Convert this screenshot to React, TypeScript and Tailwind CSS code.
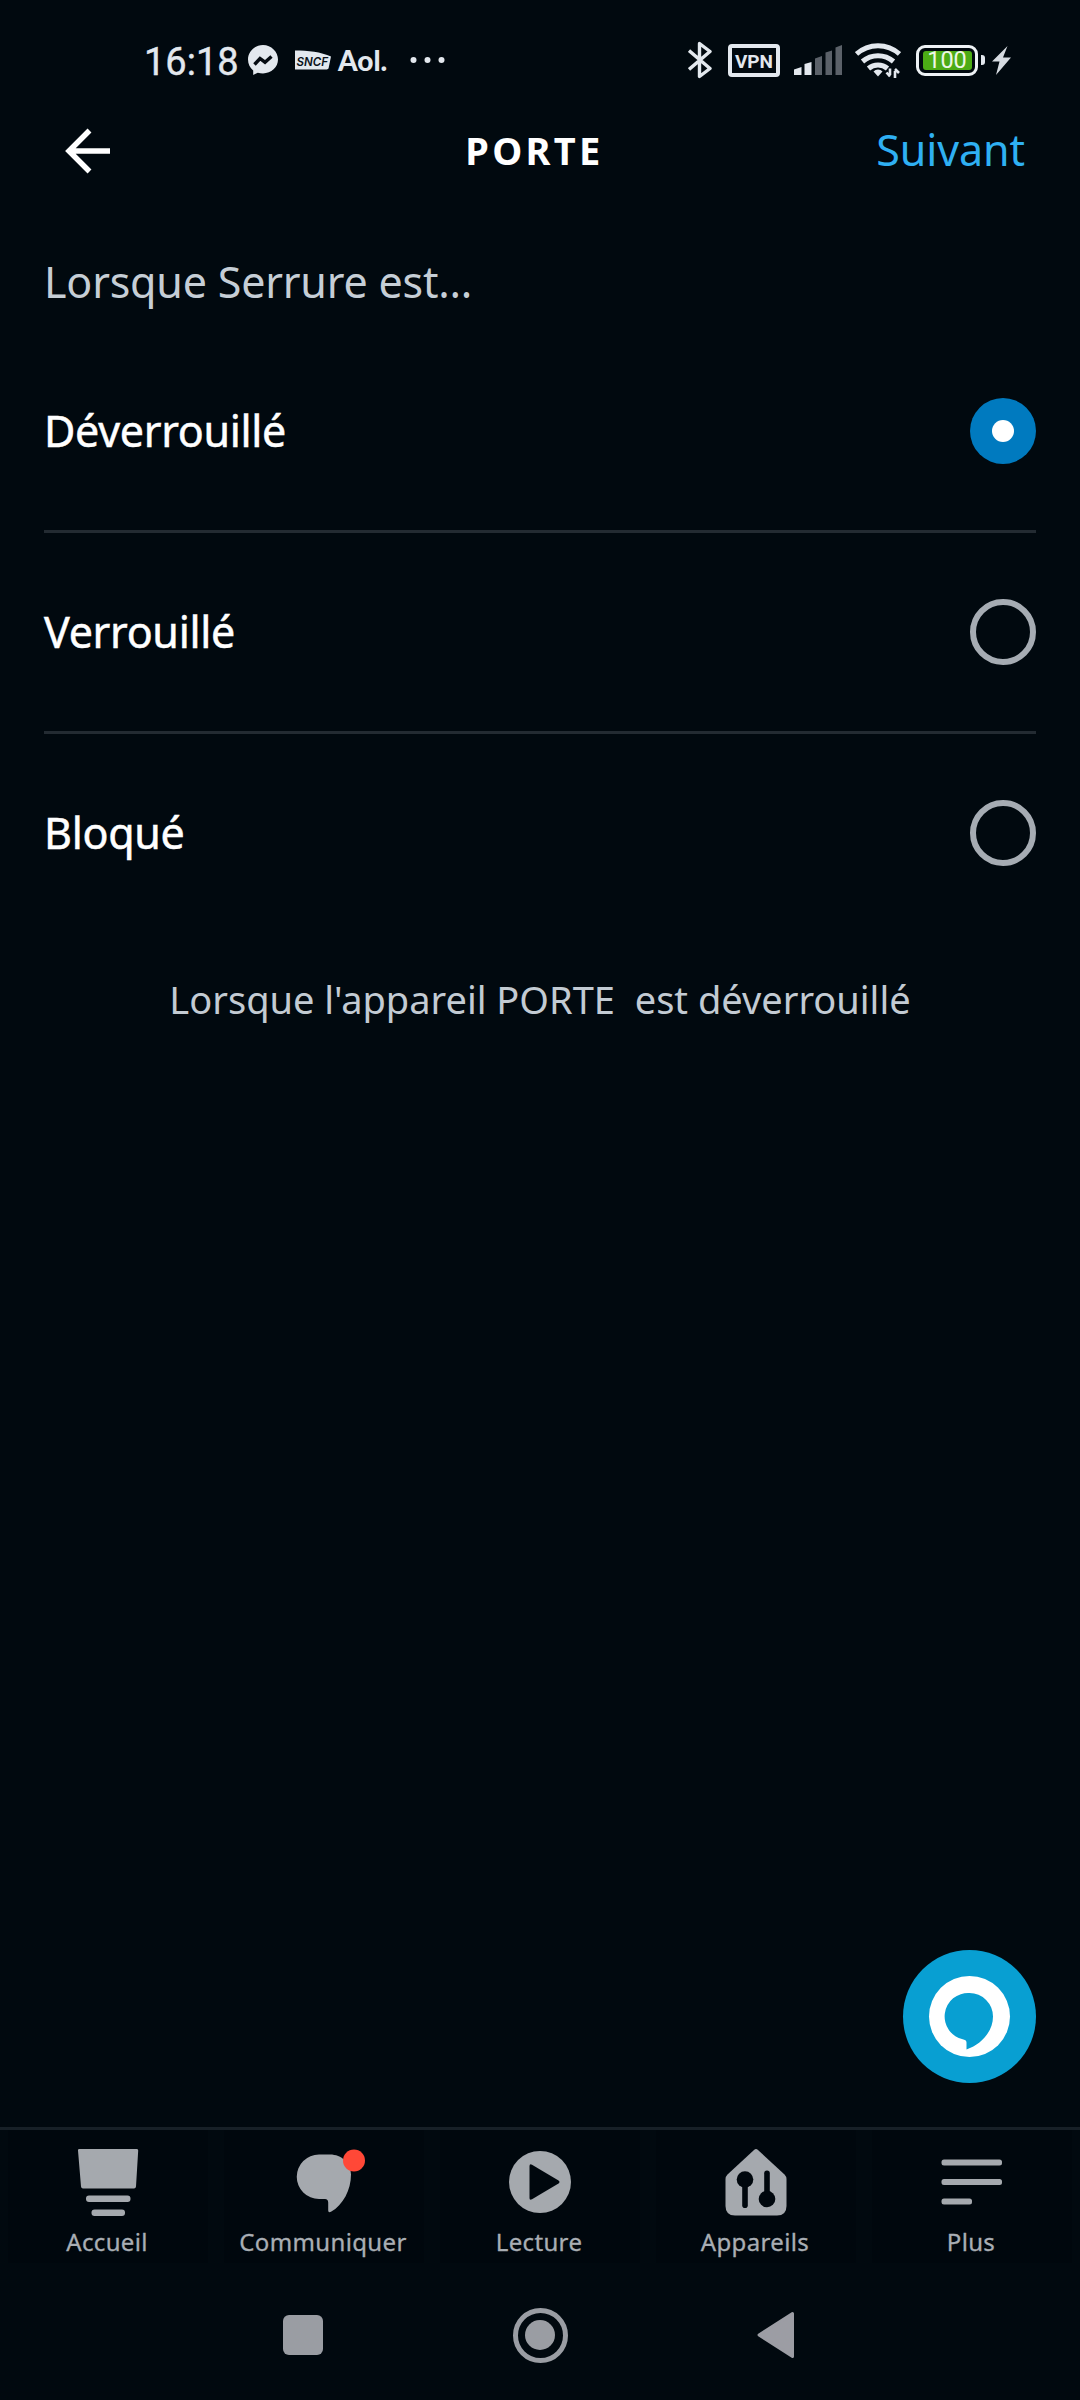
import { useState, type ReactNode } from "react";

function StatusBar() {
  return (
    <div className="flex h-[120px] shrink-0 items-center justify-between pl-[144px] pr-[69px] text-[#e3e8ee]">
      <div className="flex items-center">
        <span className="w-[104px] pt-[3px] font-['Roboto',sans-serif] text-[38px] leading-[44px] [-webkit-text-stroke:0.4px_#e3e8ee]">16:18</span>
        <svg width="30" height="32" viewBox="0 0 30 32" className="mr-[17px]">
          <path
            d="M15 1C6.700 1 0 7.400 0 15.600c0 4.500 2 8.300 5.200 10.900V31l4.600-2.300c1.600.5 3.400.8 5.200.8 8.300 0 15-6.200 15-13.900S23.300 1 15 1Z"
            fill="#e3e8ee"
          />
          <path d="M6.500 20.500 12 14.500 17 18.200 23.500 12.500" fill="none" stroke="#050b12" strokeWidth="3.400" strokeLinejoin="miter" />
        </svg>
        <svg width="36" height="20" viewBox="0 0 36 20" className="mr-[7px]">
          <path d="M0 .5C13 .5 26 2 36 6.500L33.500 18.500 32 19.500H0Z" fill="#e3e8ee" />
          <text
            x="1.500"
            y="16"
            textLength="31.500"
            lengthAdjust="spacingAndGlyphs"
            className="fill-[#0a1118] font-['Inter',sans-serif] text-[12px] font-semibold italic"
          >
            SNCF
          </text>
        </svg>
        <span className="w-[72px] font-['Lato',sans-serif] text-[28px] font-black leading-[34px]">Aol.</span>
        <svg width="36" height="8" viewBox="0 0 36 8" fill="#e3e8ee">
          <circle cx="3.500" cy="4" r="3" />
          <circle cx="17.500" cy="4" r="3" />
          <circle cx="31.500" cy="4" r="3" />
        </svg>
      </div>
      <div className="flex items-center">
        <svg width="24" height="38" viewBox="0 0 24 38" fill="none" stroke="#e3e8ee" strokeWidth="3.400" className="mr-4">
          <path d="M1 9.500 22 27.500 11.500 35.500V2.500L22 10.500 1 28.500" strokeLinejoin="round" />
        </svg>
        <div className="mr-[14px] flex h-[33px] w-[52px] items-center justify-center rounded-[4px] border-4 border-[#e3e8ee] pt-[2px] font-['Roboto',sans-serif] text-[19px] font-bold leading-none">
          VPN
        </div>
        <svg width="48" height="30" viewBox="0 0 48 30" className="mr-[13px]">
          <g fill="#e3e8ee">
            <path d="M0 24.500 7.500 22V30H0Z" />
            <path d="M10.500 19 17.500 17V30H10.500Z" />
          </g>
          <g fill="#5b6169">
            <path d="M21 13.500 28 11V30H21Z" />
            <path d="M31.500 7.500 38 5.500V30H31.500Z" />
            <path d="M41.500 2.500 48 0V30H41.500Z" />
          </g>
        </svg>
        <svg width="46" height="36" viewBox="0 0 46 36" className="mr-[15px]">
          <g fill="none" stroke="#e3e8ee" strokeWidth="5">
            <path d="M1.500 12a32 32 0 0 1 43 0" />
            <path d="M7.500 19.500a23.500 23.500 0 0 1 31 0" />
            <path d="M13.500 26.500a14.500 14.500 0 0 1 19 0" />
          </g>
          <path d="M18.500 29.500a6 6 0 0 1 9 0L23 34.500Z" fill="#e3e8ee" />
          <path d="M35 26.500V33M35 34.500 31.500 30.500M40 36V29M40 27 44 31" fill="none" stroke="#e3e8ee" strokeWidth="2.600" />
        </svg>
        <div className="flex items-center">
          <div className="flex h-[31px] w-[62px] items-center justify-center rounded-[9px] border-[3px] border-[#eef2f5]">
            <span className="flex h-[19px] w-[49px] items-center justify-center rounded-[3px] bg-[#4cab15] pt-[2px] font-['Roboto',sans-serif] text-[23.5px] leading-none text-[#edf7e6]">
              100
            </span>
          </div>
          <span className="ml-[3px] mr-[7px] h-[10px] w-1 rounded-r-[3px] bg-[#e3e8ee]" />
        </div>
        <svg width="19" height="29" viewBox="0 0 19 29">
          <path d="M15.500 0 0 15.500H7.500L4 29 19 11.500H11Z" fill="#d6dbe1" />
        </svg>
      </div>
    </div>
  );
}

function Header() {
  return (
    <div className="grid h-[62px] shrink-0 grid-cols-3 items-center pl-[64px] pr-[55px]">
      <svg width="48" height="48" viewBox="0 0 48 48" fill="none" stroke="#fff" strokeWidth="5.500">
        <path d="M46 24H6M25.500 3.500 5 24 25.500 44.500" />
      </svg>
      <h1 className="-ml-[20px] -mt-[3px] text-center text-[38px] font-bold leading-[58px] tracking-[3.300px] text-white">PORTE</h1>
      <button className="-mt-[2px] text-right text-[43px] leading-[60px] tracking-[-0.100px] text-[#2fb0f3]">Suivant</button>
    </div>
  );
}

function Radio({ selected }: { selected: boolean }) {
  return selected ? (
    <span className="flex size-[66px] items-center justify-center rounded-full bg-[#007abf]">
      <span className="size-[22px] rounded-full bg-white" />
    </span>
  ) : (
    <span className="size-[66px] rounded-full border-6 border-[#a6acb3]" />
  );
}

const options = ["Déverrouillé", "Verrouillé", "Bloqué"];

const tabs: { label: string; icon: ReactNode }[] = [
  {
    label: "Accueil",
    icon: (
      <>
        <path d="M4 1H62A1.500 1.500 0 0 1 63.200 2.500L61 38.500Q60.800 40.500 59 40.500H8Q6.200 40.500 6 38.500L3 2.500Q2.700 1 4 1Z" />
        <rect x="11" y="47.500" width="44.500" height="6.500" rx="3" />
        <rect x="16.500" y="61.500" width="33.500" height="6.500" rx="3" />
      </>
    ),
  },
  {
    label: "Communiquer",
    icon: (
      <>
        <path d="M28 6.500H39C50.500 6.500 60 15 60 26.500C60 42 52 57 40 63.800Q37.200 65 37.200 62.500V54.500Q37.200 51 34 51H28A22.250 22.250 0 0 1 28 6.500Z" />
        <circle cx="63" cy="12.500" r="11" fill="#ff4837" />
      </>
    ),
  },
  {
    label: "Lecture",
    icon: (
      <>
        <circle cx="33" cy="34" r="31" />
        <path d="M22.500 18Q22.500 15.500 25 16.700L51.500 32.500Q53.500 34 51.500 35.500L25 51.200Q22.500 52.500 22.500 50Z" fill="#00070d" />
      </>
    ),
  },
  {
    label: "Appareils",
    icon: (
      <>
        <path d="M31 2Q33 .2 35 2L61.500 26.500Q63.500 28.500 63.500 31V58Q63.500 67.500 54 67.500H12Q2.500 67.500 2.500 58V31Q2.500 28.500 4.500 26.500Z" />
        <g fill="#00070d">
          <circle cx="22" cy="31.500" r="8.300" />
          <rect x="19.200" y="31" width="5.600" height="29" rx="2.800" />
          <circle cx="44" cy="51" r="8.300" />
          <rect x="41.200" y="22.500" width="5.600" height="29" rx="2.800" />
        </g>
      </>
    ),
  },
  {
    label: "Plus",
    icon: (
      <>
        <rect x="2.500" y="11.500" width="60.500" height="6" rx="2.500" />
        <rect x="2.500" y="31" width="60.500" height="6" rx="2.500" />
        <rect x="2.500" y="50.500" width="30.500" height="6" rx="2.500" />
      </>
    ),
  },
];

function TabBar() {
  return (
    <nav className="grid h-[152px] shrink-0 grid-cols-5 border-t-[3px] border-[#172027]">
      {tabs.map((tab) => (
        <div key={tab.label} className="mx-2 mb-4 flex flex-col items-center bg-[#00070d] pt-[18px]">
          <svg width="66" height="70" viewBox="0 0 66 70" fill="#a5a9ae" className="shrink-0 overflow-visible">
            {tab.icon}
          </svg>
          <span className="-ml-[2px] mt-[7px] text-[24px] leading-[34px] tracking-[0.350px] text-[#a9aeb4] [-webkit-text-stroke:0.3px_#a9aeb4]">
            {tab.label}
          </span>
        </div>
      ))}
    </nav>
  );
}

function SystemBar() {
  return (
    <div className="flex h-[121px] shrink-0 items-center justify-between pb-[9px] pl-[283px] pr-[285px]">
      <span className="size-10 rounded-[6px] bg-[#9a9da3]" />
      <span className="flex size-[55px] items-center justify-center rounded-full border-[5px] border-[#9a9da3]">
        <span className="size-[30px] rounded-full bg-[#9a9da3]" />
      </span>
      <svg width="38" height="48" viewBox="0 0 38 48">
        <path d="M2 24 35.500 2.500V45.500Z" fill="#9c9da4" stroke="#9c9da4" strokeWidth="3" strokeLinejoin="round" />
      </svg>
    </div>
  );
}

export default function App() {
  const [selected, setSelected] = useState(0);
  return (
    <div className="relative flex h-[2400px] w-[1080px] flex-col overflow-hidden bg-[#01090f] font-['Noto_Sans',sans-serif]">
      <StatusBar />
      <Header />
      <main className="flex grow flex-col px-11">
        <p className="mt-[70px] text-[43px] leading-[60px] tracking-[-0.200px] text-[#c6ced6]">Lorsque Serrure est…</p>
        <div className="mt-[20px] flex flex-col divide-y-[3px] divide-[#232b32]">
          {options.map((option, i) => (
            <button
              key={option}
              onClick={() => setSelected(i)}
              className="box-content flex h-[198px] items-center justify-between text-left"
            >
              <span className="text-[43px] leading-[60px] tracking-[-0.300px] text-white [-webkit-text-stroke:0.5px_white]">{option}</span>
              <Radio selected={i === selected} />
            </button>
          ))}
        </div>
        <p className="mt-[37px] whitespace-pre text-center text-[38px] leading-[60px] text-[#c3cbd3]">
          {"Lorsque l'appareil PORTE  est déverrouillé"}
        </p>
      </main>
      <button className="absolute right-11 bottom-[317px] size-[133px] rounded-full bg-[#089fd2]">
        <svg width="133" height="133" viewBox="0 0 133 133">
          <circle cx="66.500" cy="66.500" r="40.500" fill="#fff" />
          <path
            d="M66.500 43A23.500 23.500 0 0 1 90 66.500C90 81 79 94 63.500 99.500V92.500Q63.500 90 60.500 89.500A23.500 23.500 0 0 1 66.500 43Z"
            fill="#089fd2"
          />
        </svg>
      </button>
      <TabBar />
      <SystemBar />
    </div>
  );
}
